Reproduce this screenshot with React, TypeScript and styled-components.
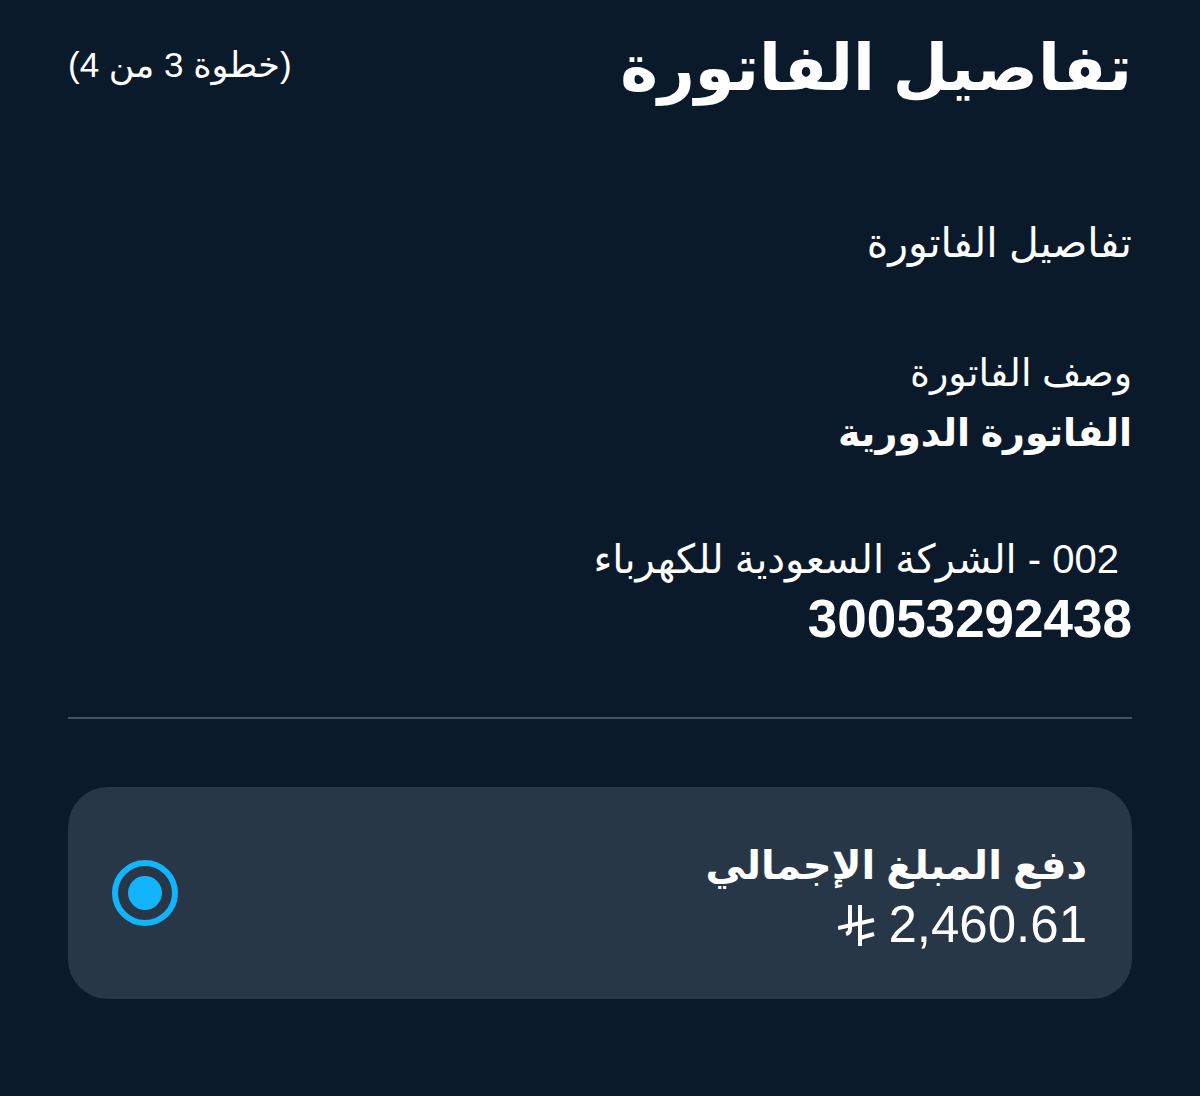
import React from "react";
import styled, { createGlobalStyle } from "styled-components";

const GlobalStyle = createGlobalStyle`
  html, body {
    margin: 0;
    padding: 0;
    background: #0b1a2a;
  }
  body {
    font-family: "Liberation Sans", "DejaVu Sans", sans-serif;
    color: #ffffff;
  }
`;

const Page = styled.div`
  direction: rtl;
  width: 1200px;
  height: 1096px;
  box-sizing: border-box;
  padding: 0 68px;
  background: #0b1a2a;
  overflow: hidden;
`;

const Header = styled.div`
  display: flex;
  justify-content: space-between;
  align-items: flex-start;
  padding-top: 22px;
`;

const Title = styled.h1`
  margin: 0;
  font-size: 64px;
  font-weight: 700;
  line-height: 92px;
`;

const Step = styled.div`
  margin-top: 25px;
  font-size: 35px;
  line-height: 36px;
`;

const SectionLabel = styled.div`
  margin-top: 105px;
  font-size: 41px;
  font-weight: 500;
  line-height: 48px;
`;

const Field = styled.div<{ $gap: number }>`
  display: flex;
  flex-direction: column;
  margin-top: ${(p) => p.$gap}px;
`;

const FieldLabel = styled.div<{ $size: number; $indent?: number }>`
  font-size: ${(p) => p.$size}px;
  line-height: 50px;
  padding-right: ${(p) => p.$indent ?? 0}px;
`;

const FieldValue = styled.div<{ $size: number }>`
  font-size: ${(p) => p.$size}px;
  font-weight: 700;
  line-height: 70px;
`;

const Divider = styled.hr`
  margin: 63px 0 0;
  border: none;
  height: 2px;
  background: #45535f;
`;

const Card = styled.div`
  margin-top: 68px;
  height: 212px;
  border-radius: 40px;
  background: #273747;
  display: flex;
  align-items: center;
  justify-content: space-between;
  padding: 0 45px 0 44px;
`;

const CardText = styled.div`
  display: flex;
  flex-direction: column;
  gap: 6px;
  padding-top: 6px;
`;

const CardTitle = styled.div`
  font-size: 40px;
  font-weight: 700;
  line-height: 52px;
`;

const Amount = styled.div`
  display: flex;
  align-items: center;
  gap: 12px;
  font-size: 51px;
  line-height: 56px;
`;

const Radio = styled.div`
  width: 66px;
  height: 66px;
  box-sizing: border-box;
  border-radius: 50%;
  border: 6px solid #12b4fb;
  display: flex;
  align-items: center;
  justify-content: center;
  &::after {
    content: "";
    width: 34px;
    height: 34px;
    border-radius: 50%;
    background: #12b4fb;
  }
`;

const RiyalSign = () => (
  <svg width="38" height="42" viewBox="0 0 38 42" fill="none" stroke="#fff" strokeWidth="4" strokeLinecap="butt">
    <path d="M12 1 V25 Q12 29 8 30" />
    <path d="M22 1 V42" />
    <path d="M0 24 L36 16" />
    <path d="M22 34 L36 30" />
  </svg>
);

export default function App() {
  return (
    <Page>
      <GlobalStyle />
      <Header>
        <Title>تفاصيل الفاتورة</Title>
        <Step>(خطوة 3 من 4)</Step>
      </Header>

      <SectionLabel>تفاصيل الفاتورة</SectionLabel>

      <Field $gap={81}>
        <FieldLabel $size={38}>وصف الفاتورة</FieldLabel>
        <FieldValue $size={38}>الفاتورة الدورية</FieldValue>
      </Field>

      <Field $gap={66}>
        <FieldLabel $size={40} $indent={13}>002 - الشركة السعودية للكهرباء</FieldLabel>
        <FieldValue $size={53}>30053292438</FieldValue>
      </Field>

      <Divider />

      <Card>
        <CardText>
          <CardTitle>دفع المبلغ الإجمالي</CardTitle>
          <Amount>
            <span>2,460.61</span>
            <RiyalSign />
          </Amount>
        </CardText>
        <Radio />
      </Card>
    </Page>
  );
}
